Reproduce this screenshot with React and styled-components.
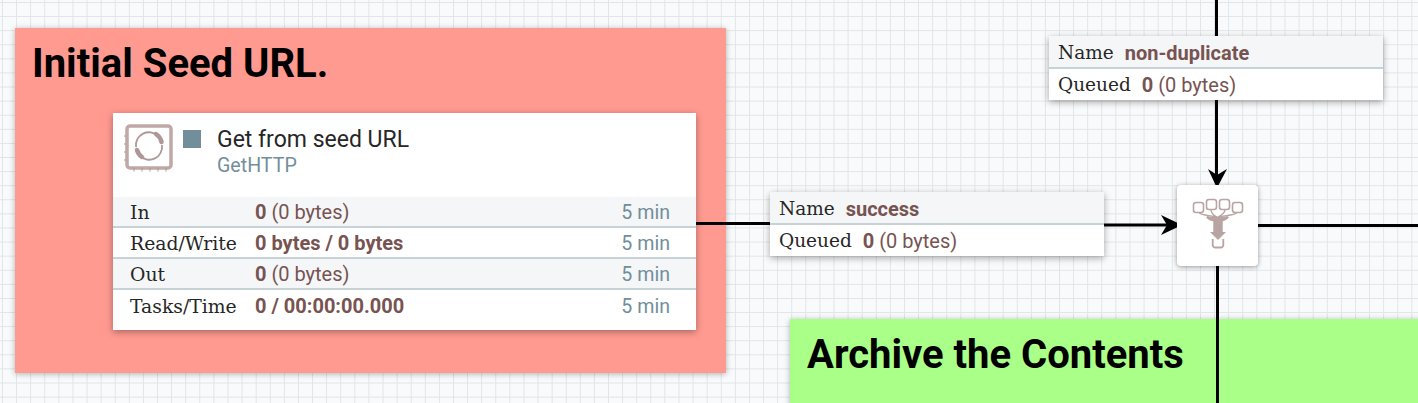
import React from "react";
import styled, { createGlobalStyle } from "styled-components";

const Global = createGlobalStyle`
  html, body {
    margin: 0;
    padding: 0;
    background: #f9fafb;
    overflow: hidden;
  }
`;

const Canvas = styled.div`
  position: relative;
  width: 1418px;
  height: 403px;
  overflow: hidden;
  font-family: Roboto, "Liberation Sans", sans-serif;
  background-color: #f9fafb;
  background-image:
    linear-gradient(to right, #dfe5e8 1px, transparent 1px),
    linear-gradient(to bottom, #dfe5e8 1px, transparent 1px);
  background-size: 14.1px 14.1px;
  background-position: 2px 2px;
`;

// everything below sits on the free canvas, so x/y are its content
const Node = styled.div`
  position: absolute;
  left: ${props => props.x}px;
  top: ${props => props.y}px;
  width: ${props => props.w}px;
  height: ${props => props.h}px;
  box-sizing: border-box;
`;

const Label = styled(Node)`
  background: ${props => props.color};
  box-shadow: 0 1px 6px rgba(0, 0, 0, 0.3);
  padding: 12px 17px;
  font-size: 40px;
  line-height: 48px;
  font-weight: 700;
  color: #000;
`;

const Card = styled(Node)`
  background: #fff;
  box-shadow: 0 2px 7px rgba(0, 0, 0, 0.35);
  display: flex;
  flex-direction: column;
`;

const ProcessorHead = styled.div`
  height: 84px;
  flex: none;
  box-sizing: border-box;
  display: flex;
  align-items: flex-start;
  padding: 11px 0 0 10px;
`;

const Status = styled.div`
  width: 18px;
  height: 18px;
  margin: 6px 0 0 10px;
  background: #728e9b;
`;

const Names = styled.div`
  margin-left: 16px;
  padding-top: 1px;
  display: flex;
  flex-direction: column;
`;

const Title = styled.div`
  font-size: 23px;
  line-height: 29px;
  color: #262626;
`;

const Type = styled.div`
  font-size: 19.6px;
  line-height: 23px;
  color: #728e9b;
`;

const Stat = styled.div`
  height: ${props => props.h || 31}px;
  flex: none;
  box-sizing: border-box;
  display: flex;
  align-items: ${props => (props.last ? "flex-start" : "center")};
  padding: ${props => (props.last ? "4px" : "2px")} 26px 0 17px;
  background: ${props => (props.shade ? "#f4f6f7" : "#fff")};
  border-bottom: ${props => (props.last ? "0" : "2px solid #c7d2d7")};
  font-size: 20px;
  line-height: 25px;
`;

const StatName = styled.div`
  width: 125px;
  flex: none;
  font-family: "DejaVu Serif", serif;
  font-size: 18.8px;
  color: #262626;
`;

const Value = styled.div`
  flex: 1;
  color: #775351;
`;

const Strong = styled.b`
  font-weight: 700;
`;

const Age = styled.div`
  color: #728e9b;
  font-size: 19.6px;
`;

const ConnRow = styled.div`
  height: ${props => (props.shade ? 33 : 31)}px;
  flex: none;
  box-sizing: border-box;
  display: flex;
  align-items: center;
  gap: 11px;
  padding-left: 9px;
  padding-top: ${props => (props.shade ? 2 : 0)}px;
  background: ${props => (props.shade ? "#f4f6f7" : "#fff")};
  border-bottom: ${props => (props.shade ? "2px solid #c7d2d7" : "0")};
  font-size: 20px;
`;

const ConnName = styled.div`
  font-family: "DejaVu Serif", serif;
  font-size: 18.5px;
  color: #262626;
`;

const Funnel = styled(Node)`
  background: #fff;
  border-radius: 4px;
  box-shadow: 0 1px 5px rgba(0, 0, 0, 0.4);
  padding: 13px 0 0 15px;
`;

const Wires = styled.svg`
  position: absolute;
  left: 0;
  top: 0;
  pointer-events: none;
`;

const ProcessorIcon = () => (
  <svg width="50" height="48" viewBox="0 0 50 48" fill="none">
    <rect x="4" y="2" width="44" height="42" rx="3" stroke="#c0a8a6" strokeWidth="3.5" />
    <path d="M1 12h2M1 20h2M1 28h2M1 36h2M11 44v3.5M19 44v3.5M27 44v3.5M35 44v3.5M43 44v3.5" stroke="#ad9897" strokeWidth="1" />
    <path d="M13 23a13 13 0 0 1 22-11" stroke="#ad9897" strokeWidth="1.8" />
    <path d="M33 10a13 13 0 0 1 5.5 8" stroke="#ad9897" strokeWidth="4.5" strokeLinecap="round" />
    <path d="M39 21a13 13 0 0 1-22 11" stroke="#ad9897" strokeWidth="1.8" />
    <path d="M19 33a13 13 0 0 1-5-7" stroke="#ad9897" strokeWidth="4.5" strokeLinecap="round" />
  </svg>
);

const FunnelIcon = () => (
  <svg width="52" height="52" viewBox="0 0 52 52" fill="none" stroke="#b8a5a3">
    <rect x="1.5" y="4.5" width="10" height="10" rx="2.5" strokeWidth="1.6" />
    <rect x="14.5" y="1.5" width="10" height="10" rx="2.5" strokeWidth="1.6" />
    <rect x="27.5" y="1.5" width="10" height="10" rx="2.5" strokeWidth="1.6" />
    <rect x="40.5" y="4.5" width="10" height="10" rx="2.5" strokeWidth="1.6" />
    <path d="M7 14.5C10 18 18 17 25 19M19 11.5C19 15 21 17 25 19M33 11.5C33 15 30 17 26 19M45 14.5C42 18 33 17 26 19" strokeWidth="1.3" />
    <path d="M15 18.5C19 24 33 24 36 18.5" strokeWidth="2.5" fill="#b8a5a3" />
    <path d="M21.3 23h9.4v11H34L26 42 18 34h3.3z" fill="#b8a5a3" stroke="none" />
    <path d="M20.7 41v6a2.5 2.5 0 0 0 2.5 2.5h5.6a2.5 2.5 0 0 0 2.5-2.5v-6" strokeWidth="1.8" />
  </svg>
);

const Connection = ({ x, y, name }) => (
  <Card x={x} y={y} w={334} h={64}>
    <ConnRow shade>
      <ConnName>Name</ConnName>
      <Value><Strong>{name}</Strong></Value>
    </ConnRow>
    <ConnRow>
      <ConnName>Queued</ConnName>
      <Value><Strong>0</Strong> (0 bytes)</Value>
    </ConnRow>
  </Card>
);

export default function App() {
  return (
    <Canvas>
      <Global />
      <Label x={15} y={28} w={711} h={345} color="#ff9a90">Initial Seed URL.</Label>
      <Label x={790} y={319} w={640} h={110} color="#aaff88">Archive the Contents</Label>

      <Wires width="1418" height="403">
        <g stroke="#000" strokeWidth="3" fill="none">
          <path d="M696 223.5H770" />
          <path d="M1104 225H1170" />
          <path d="M1216.5 0V36M1216.5 100V178" />
          <path d="M1258 225.5H1418" />
          <path d="M1217.5 266V403" />
        </g>
        <path d="M1182 225L1161 215L1167 225L1161 235Z" fill="#000" />
        <path d="M1217 188L1208 169L1217 175L1227 169Z" fill="#000" />
      </Wires>

      <Card x={113} y={113} w={583} h={217}>
        <ProcessorHead>
          <ProcessorIcon />
          <Status />
          <Names>
            <Title>Get from seed URL</Title>
            <Type>GetHTTP</Type>
          </Names>
        </ProcessorHead>
        <Stat shade>
          <StatName>In</StatName>
          <Value><Strong>0</Strong> (0 bytes)</Value>
          <Age>5 min</Age>
        </Stat>
        <Stat>
          <StatName>Read/Write</StatName>
          <Value><Strong>0 bytes / 0 bytes</Strong></Value>
          <Age>5 min</Age>
        </Stat>
        <Stat shade>
          <StatName>Out</StatName>
          <Value><Strong>0</Strong> (0 bytes)</Value>
          <Age>5 min</Age>
        </Stat>
        <Stat last h={40}>
          <StatName>Tasks/Time</StatName>
          <Value><Strong>0 / 00:00:00.000</Strong></Value>
          <Age>5 min</Age>
        </Stat>
      </Card>

      <Connection x={770} y={192} name="success" />
      <Connection x={1049} y={36} name="non-duplicate" />

      <Funnel x={1177} y={185} w={81} h={81}>
        <FunnelIcon />
      </Funnel>
    </Canvas>
  );
}
